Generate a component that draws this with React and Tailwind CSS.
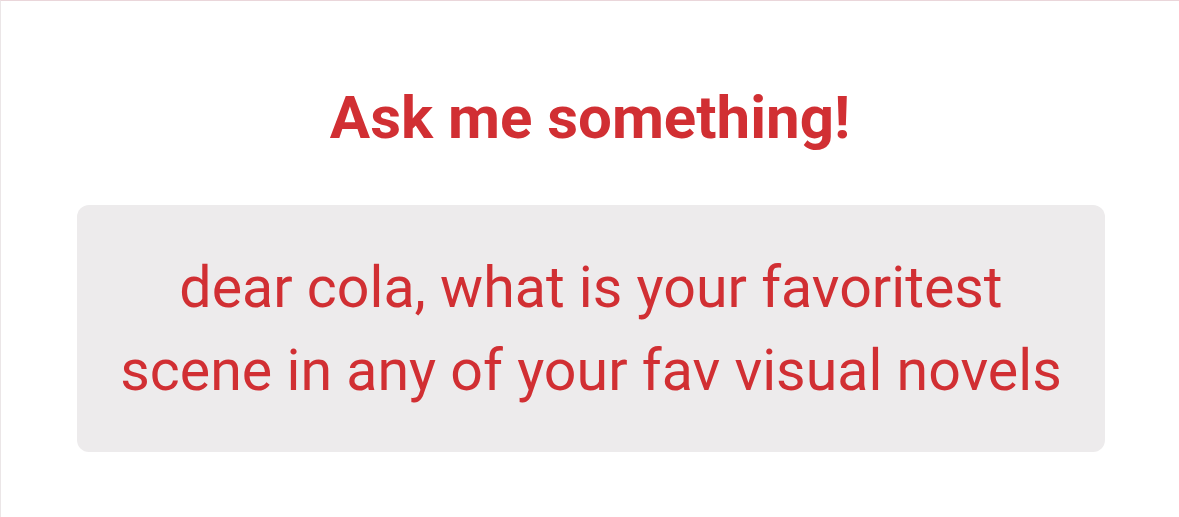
export default function App() {
  return (
    <div
      className="w-[1179px] h-[517px] bg-white border-t border-t-[#ead6da] border-l border-l-[#ebe6e7] flex flex-col items-center"
      style={{ fontFamily: 'Roboto, "Liberation Sans", sans-serif' }}
    >
      <h1 className="mt-[87px] text-[60px] leading-[60px] font-bold text-[#d12f33]">Ask me something!</h1>
      <div className="mt-[57px] ml-[2px] w-[1028px] h-[247px] rounded-[12px] bg-[#edebec] flex items-center justify-center">
        <p className="text-center text-[57.3px] leading-[83px] text-[#d12f33]">
          dear cola, what is your favoritest
          <br />
          scene in any of your fav visual novels
        </p>
      </div>
    </div>
  );
}
